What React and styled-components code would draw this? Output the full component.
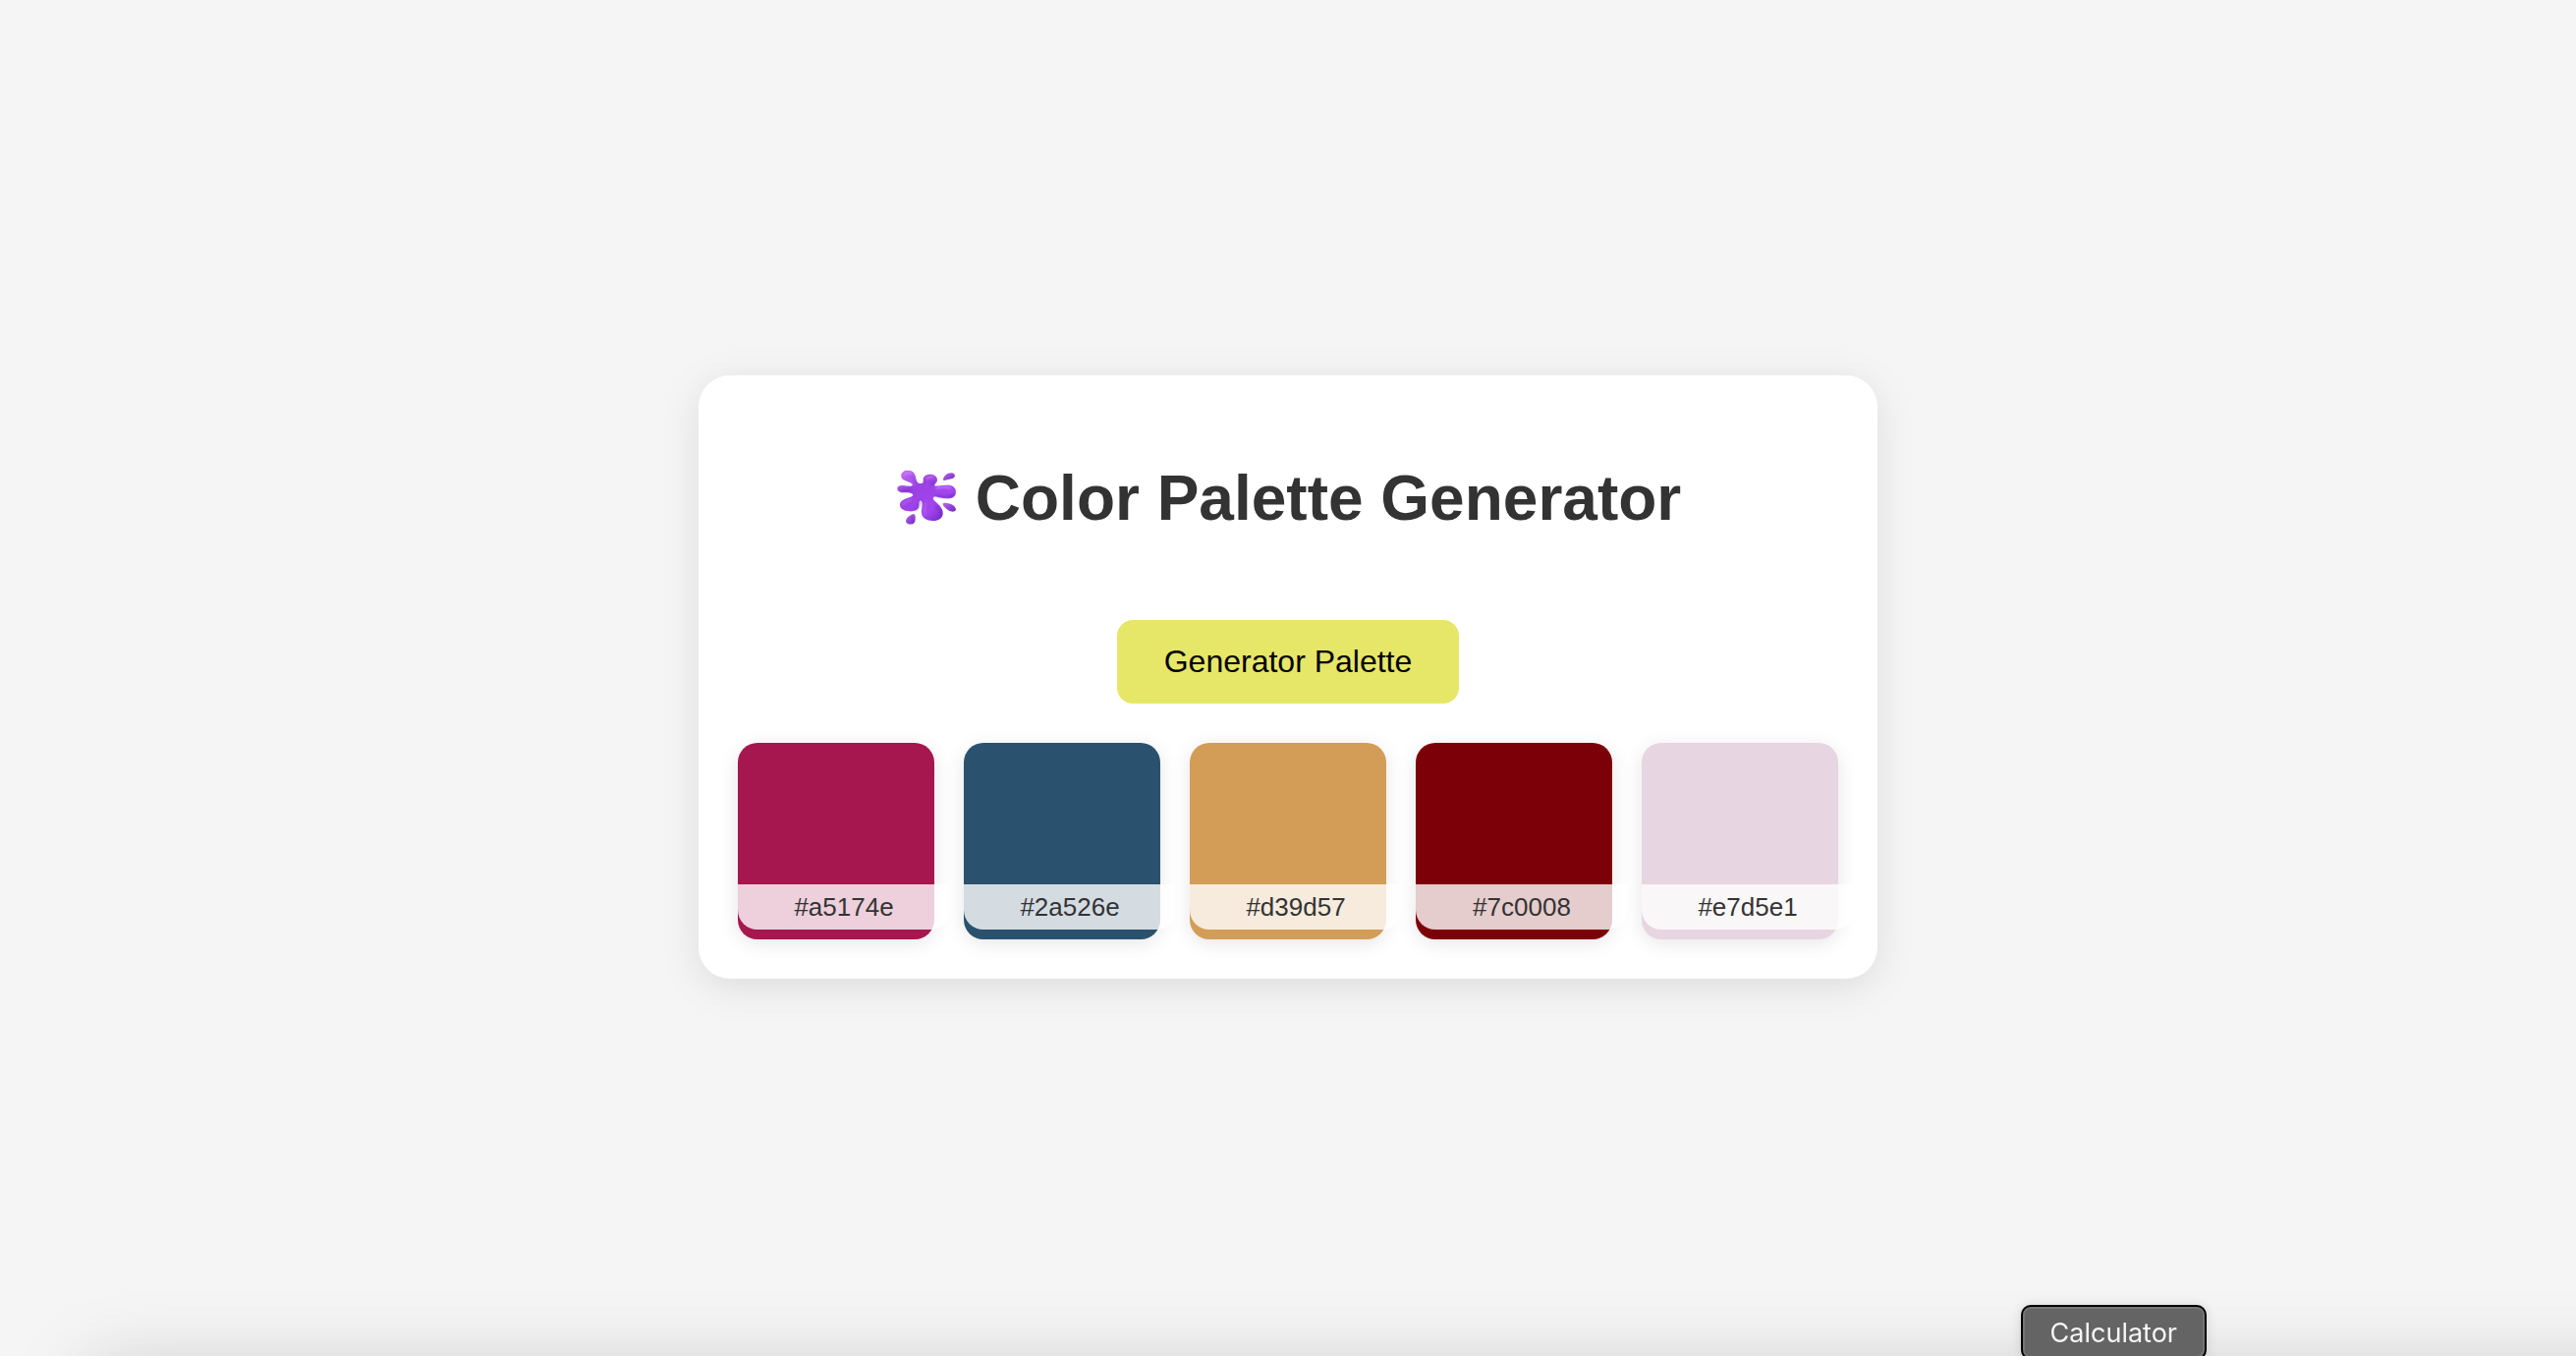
import React from "react";
import styled, { createGlobalStyle } from "styled-components";

const GlobalStyle = createGlobalStyle`
  *, *::before, *::after { box-sizing: border-box; }
  body {
    margin: 0;
    overflow: hidden;
    background: #f5f5f5;
    color: #333;
    font-family: Helvetica, "Liberation Sans", Arial, sans-serif;
  }
`;

const Page = styled.main`
  min-height: 100vh;
  display: flex;
  align-items: center;
  justify-content: center;
  padding-bottom: 2px;
`;

const Card = styled.section`
  display: flex;
  flex-direction: column;
  align-items: center;
  width: 100%;
  max-width: 1200px;
  padding: 40px;
  border-radius: 32px;
  background: #fff;
  box-shadow: 0 8px 40px rgba(0, 0, 0, 0.1);
`;

const Title = styled.h1`
  display: flex;
  align-items: center;
  gap: 18px;
  margin: 45px 0 84px;
  font-size: 64px;
  line-height: 80px;
  font-weight: 700;
`;

const SplatIcon = styled.svg`
  width: 64px;
  height: 64px;
`;

const GenerateButton = styled.button`
  padding: 24px 48px;
  border: 0;
  border-radius: 16px;
  background: #e6e669;
  color: #000;
  font-family: "Liberation Sans", Arial, sans-serif;
  font-size: 32px;
  line-height: 37px;
  cursor: pointer;
`;

const Palette = styled.ul`
  display: grid;
  grid-template-columns: repeat(5, 1fr);
  gap: 30px;
  width: 100%;
  margin: 40px 0 0;
  padding: 0;
  list-style: none;
`;

const Swatch = styled.li`
  display: flex;
  flex-direction: column;
  justify-content: flex-end;
  height: 200px;
  padding-bottom: 10px;
  border-radius: 20px;
  background: ${({ $color }) => $color};
  box-shadow: 0 4px 20px rgba(0, 0, 0, 0.1);
`;

const HexLabel = styled.span`
  margin-right: -16px;
  padding: 8px 10px;
  border-radius: 0 0 20px 20px;
  background: rgba(255, 255, 255, 0.8);
  color: #333;
  font-size: 26px;
  line-height: 30px;
  text-align: center;
`;

const DockShadow = styled.div`
  position: fixed;
  top: calc(100% + 12px);
  left: 90px;
  right: -100px;
  height: 120px;
  box-shadow: 0 0 80px rgba(0, 0, 0, 0.18);
  pointer-events: none;
`;

const DockTooltip = styled.div`
  position: fixed;
  right: 376px;
  bottom: -4px;
  padding: 9px 28px 7px;
  border: 2px solid #000;
  border-radius: 10px;
  background: #646464;
  box-shadow: inset 0 0 0 2px #757575, 0 0 12px rgba(0, 0, 0, 0.12);
  color: #f5f5f5;
  font-family: Inter, sans-serif;
  font-size: 27px;
  line-height: 36px;
`;

const colors = ["#a5174e", "#2a526e", "#d39d57", "#7c0008", "#e7d5e1"];

function Splat() {
  return (
    <SplatIcon viewBox="33 46 192 192" aria-hidden="true">
      <defs>
        <linearGradient id="body" x1="50" y1="56" x2="180" y2="212" gradientUnits="userSpaceOnUse">
          <stop offset="0" stopColor="#c774f4" />
          <stop offset="0.3" stopColor="#9a41e2" />
          <stop offset="0.75" stopColor="#a245ee" />
          <stop offset="1" stopColor="#7426c8" />
        </linearGradient>
        <linearGradient id="drop" x1="0" y1="0" x2="1" y2="1">
          <stop offset="0" stopColor="#bd68ee" />
          <stop offset="1" stopColor="#6e25c0" />
        </linearGradient>
        <filter id="soft" x="-20%" y="-20%" width="140%" height="140%">
          <feGaussianBlur stdDeviation="3" />
        </filter>
      </defs>
      <path
        fill="url(#body)"
        d="M52 76C50 64 59 57 72 57C88 57 95 67 97 82C99 93 103 97 109 97C117 98 120 94 119 87C118 76 128 69 141 69C154 69 163 78 162 88C160 97 151 99 154 104C159 107 177 101 193 102C210 102 219 110 219 123C218 136 209 143 193 143C175 143 157 134 151 139C146 144 153 150 164 159C174 168 180 178 179 190C177 204 164 212 148 211C125 210 112 199 114 180C115 166 119 154 111 149C103 150 108 163 103 173C97 181 86 183 76 182C59 181 47 173 48 161C49 148 65 144 77 140C89 136 91 131 82 127C70 123 61 126 51 124C43 122 40 118 40 112C40 105 48 102 57 103C69 104 83 107 86 103C88 98 80 94 71 91C60 87 53 84 52 76Z"
      />
      <g fill="none" strokeLinecap="round" filter="url(#soft)" opacity="0.7">
        <path stroke="#d28af8" strokeWidth="7" d="M62 70Q70 62 82 66M130 82Q138 74 148 77M160 111Q180 106 202 110" />
        <path stroke="#662abb" strokeWidth="5" d="M49 119Q65 116 80 119M162 135Q193 143 214 131M109 150Q107 169 97 177M158 166Q177 182 172 196M155 96L144 99" />
        <path stroke="#bd6cf8" strokeWidth="5" d="M56 161Q65 151 82 147M127 158Q121 176 123 192M93 101L75 84" />
      </g>
      <path fill="url(#drop)" d="M180 85C181 76 191 65 204 65C213 65 218 70 215 77C211 84 201 84 191 86C184 88 180 89 180 85Z" />
      <path fill="url(#drop)" d="M179 160C180 154 188 156 195 158C207 159 216 167 219 175C219 182 211 185 202 182C192 177 180 168 179 160Z" />
      <path fill="url(#drop)" d="M93 192C96 197 95 206 94 213C91 221 82 223 74 221C66 219 64 212 68 205C74 198 87 188 93 192Z" />
    </SplatIcon>
  );
}

export default function App() {
  return (
    <>
      <GlobalStyle />
      <Page>
        <Card>
          <Title>
            <Splat />
            Color Palette Generator
          </Title>
          <GenerateButton type="button">Generator Palette</GenerateButton>
          <Palette>
            {colors.map((color) => (
              <Swatch key={color} $color={color}>
                <HexLabel>{color}</HexLabel>
              </Swatch>
            ))}
          </Palette>
        </Card>
      </Page>
      <DockShadow />
      <DockTooltip role="tooltip">Calculator</DockTooltip>
    </>
  );
}
